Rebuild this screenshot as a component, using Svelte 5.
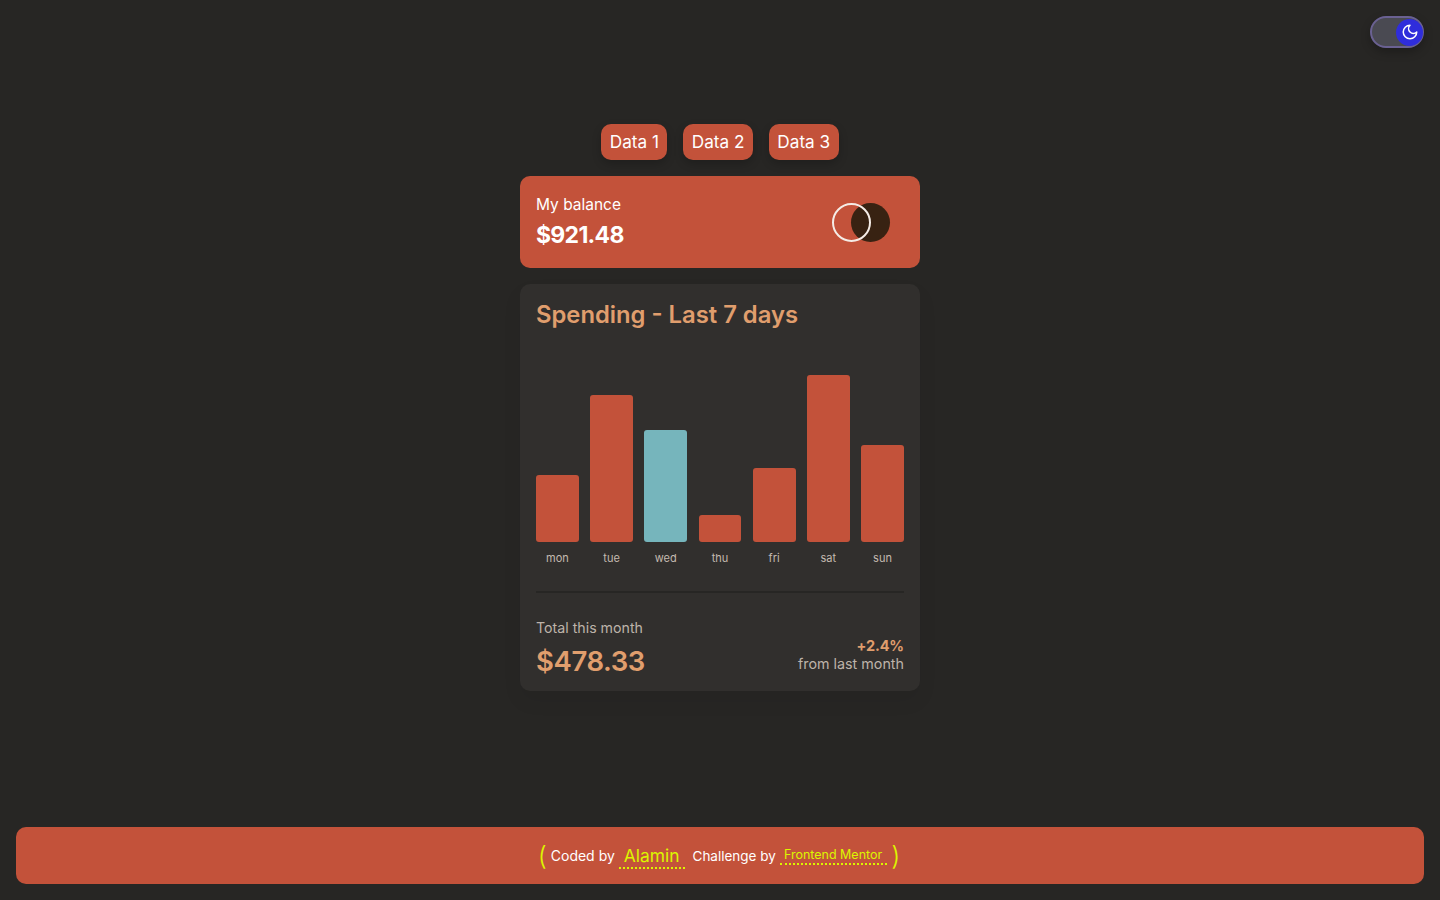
<script>
	const days = [
		{ day: "mon", height: 67 },
		{ day: "tue", height: 147 },
		{ day: "wed", height: 112, today: true },
		{ day: "thu", height: 27 },
		{ day: "fri", height: 74 },
		{ day: "sat", height: 167 },
		{ day: "sun", height: 97 }
	];
	const tabs = ["Data 1", "Data 2", "Data 3"];
</script>

<div class="page">
	<header class="top">
		<button class="toggle" aria-label="Toggle theme">
			<span class="knob">
				<svg width="18" height="18" viewBox="0 0 24 24" fill="none" stroke="#fff" stroke-width="2" stroke-linecap="round" stroke-linejoin="round">
					<path d="M12 3a6 6 0 0 0 9 9 9 9 0 1 1-9-9Z" />
				</svg>
			</span>
		</button>
	</header>

	<main class="main">
		<div class="tabs">
			{#each tabs as tab}
				<button class="tab">{tab}</button>
			{/each}
		</div>

		<section class="balance">
			<div>
				<p class="balance-label">My balance</p>
				<p class="balance-value">$921.48</p>
			</div>
			<div class="logo">
				<span class="dark"></span>
				<span class="ring"></span>
			</div>
		</section>

		<section class="card">
			<h1>Spending - Last 7 days</h1>
			<div class="chart">
				{#each days as d}
					<div class="col">
						<div class="bar" class:today={d.today} style="height: {d.height}px"></div>
						<span class="day">{d.day}</span>
					</div>
				{/each}
			</div>
			<div class="summary">
				<div>
					<p class="total-label">Total this month</p>
					<p class="total-value">$478.33</p>
				</div>
				<div class="change">
					<p class="pct">+2.4%</p>
					<p class="from">from last month</p>
				</div>
			</div>
		</section>
	</main>

	<footer class="footer">
		<span class="paren">(</span>
		<span class="by first">Coded by</span>
		<a class="name" href="#top">Alamin</a>
		<span class="by second">Challenge by</span>
		<a class="mentor" href="#top">Frontend Mentor</a>
		<span class="paren last">)</span>
	</footer>
</div>

<style>
	:global(body) {
		background: #272624;
		font-family: "Inter", "Liberation Sans", sans-serif;
		color: #fff;
	}
	p, h1 {
		margin: 0;
	}
	.page {
		height: 900px;
		box-sizing: border-box;
		padding: 16px;
		display: flex;
		flex-direction: column;
	}
	.top {
		display: flex;
		justify-content: flex-end;
	}
	.toggle {
		width: 54px;
		height: 32px;
		box-sizing: border-box;
		padding: 0;
		border: 2px solid #6a6192;
		border-radius: 16px;
		background: #4a4a52;
		display: flex;
		align-items: center;
		justify-content: flex-end;
		box-shadow: 0 4px 10px rgba(0, 0, 0, 0.25);
	}
	.knob {
		width: 27px;
		height: 27px;
		margin-right: -1px;
		border-radius: 50%;
		background: #2f2ddb;
		display: flex;
		align-items: center;
		justify-content: center;
	}
	.main {
		width: 400px;
		margin: 76px auto 0;
		display: flex;
		flex-direction: column;
		gap: 16px;
	}
	.tabs {
		display: flex;
		justify-content: center;
		gap: 16px;
	}
	.tab {
		height: 36px;
		padding: 0 8.4px 1px;
		border: 0;
		border-radius: 10px;
		background: #c3523a;
		color: #fff;
		font-family: inherit;
		font-size: 17.2px;
		box-shadow: 0 4px 10px rgba(0, 0, 0, 0.2);
	}
	.balance {
		height: 92px;
		box-sizing: border-box;
		padding: 0 30px 0 16px;
		border-radius: 10px;
		background: #c3523a;
		display: flex;
		align-items: center;
		justify-content: space-between;
	}
	.balance-label {
		padding-top: 1px;
		font-size: 15.5px;
		line-height: 20px;
	}
	.balance-value {
		margin-top: 5px;
		font-size: 23px;
		line-height: 30px;
		font-weight: 700;
		letter-spacing: -0.7px;
	}
	.logo {
		position: relative;
		width: 58px;
		height: 39px;
	}
	.dark, .ring {
		position: absolute;
		top: 0;
		width: 39px;
		height: 39px;
		box-sizing: border-box;
		border-radius: 50%;
	}
	.dark {
		right: 0;
		background: #382212;
	}
	.ring {
		left: 0;
		border: 2px solid #f5ece6;
	}
	.card {
		height: 407px;
		box-sizing: border-box;
		padding: 16px;
		border-radius: 10px;
		background: #312f2d;
		box-shadow: 0 10px 20px rgba(0, 0, 0, 0.06);
	}
	h1 {
		font-size: 23.8px;
		line-height: 30px;
		font-weight: 600;
		color: #e09e6d;
	}
	.chart {
		height: 192px;
		margin-top: 45px;
		display: flex;
		justify-content: space-between;
		align-items: flex-end;
	}
	.col {
		width: 42.8px;
		display: flex;
		flex-direction: column;
		align-items: center;
	}
	.bar {
		width: 100%;
		border-radius: 3px;
		background: #c3523a;
	}
	.bar.today {
		background: #76b5bc;
	}
	.day {
		margin-top: 8px;
		margin-bottom: 1px;
		font-size: 11px;
		line-height: 16px;
		color: #c4bab0;
	}
	.summary {
		margin-top: 24px;
		padding-top: 25px;
		border-top: 2px solid #272624;
		display: flex;
		justify-content: space-between;
		align-items: flex-end;
	}
	.total-label {
		font-size: 14.2px;
		line-height: 20px;
		color: #bdb3a9;
	}
	.total-value {
		margin-top: 5px;
		font-size: 27.5px;
		line-height: 36px;
		font-weight: 600;
		letter-spacing: -0.4px;
		color: #e09e6d;
	}
	.change {
		text-align: right;
		padding-bottom: 7px;
	}
	.pct {
		margin-bottom: -1px;
		font-size: 14.5px;
		line-height: 20px;
		font-weight: 700;
		letter-spacing: -0.1px;
		color: #e09e6d;
	}
	.from {
		font-size: 14.3px;
		line-height: 17px;
		color: #bdb3a9;
	}
	.footer {
		margin-top: auto;
		height: 57px;
		box-sizing: border-box;
		padding-right: 2px;
		border-radius: 10px;
		background: #c3523a;
		display: flex;
		align-items: center;
		justify-content: center;
		font-size: 14px;
	}
	.paren {
		color: #dcf500;
		font-size: 26px;
		font-weight: 300;
	}
	.first {
		margin-left: 4px;
	}
	.name {
		margin-left: 4px;
		margin-top: 2px;
		padding: 0 5px 1px;
		color: #dcf500;
		font-size: 17.4px;
		text-decoration: none;
		border-bottom: 2px dotted #dcf500;
	}
	.second {
		margin-left: 8px;
		font-size: 13.5px;
	}
	.mentor {
		margin-left: 4px;
		padding: 0 5px 1px 4px;
		margin-top: 1px;
		color: #dcf500;
		font-size: 12.5px;
		text-decoration: none;
		border-bottom: 2px dotted #dcf500;
	}
	.last {
		margin-left: 4px;
	}
</style>
